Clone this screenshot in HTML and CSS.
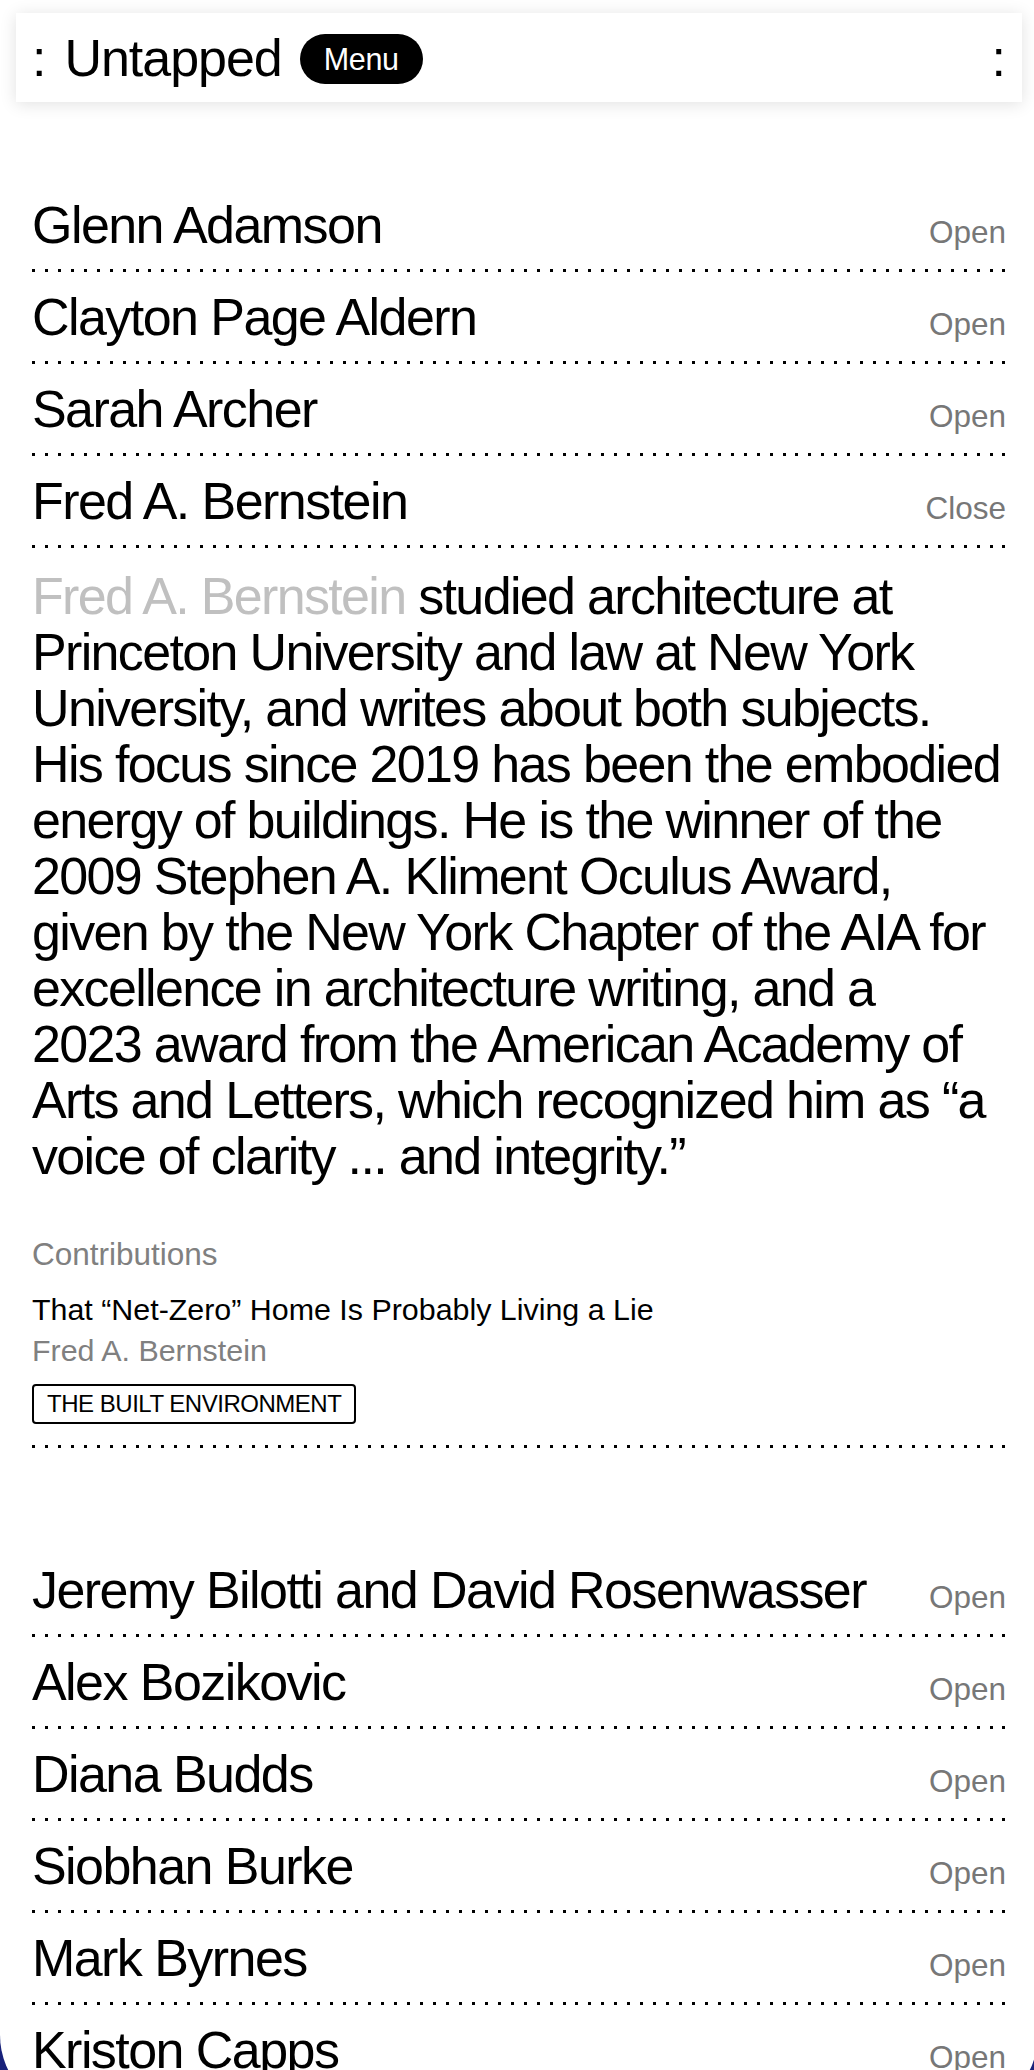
FILE: index.html
```html
<!DOCTYPE html>
<html lang="en">
<head>
<meta charset="utf-8">
<title>Untapped — Contributors</title>
<link rel="stylesheet" href="styles.css">
</head>
<body>
<header class="topbar">
  <div class="brand">
    <span class="brand-colon">:</span>
    <span class="brand-title">Untapped</span>
    <span class="menu-pill">Menu</span>
  </div>
  <span class="end-colon">:</span>
</header>

<main class="directory">
  <div class="entry-row"><span class="entry-name">Glenn Adamson</span><span class="entry-toggle">Open</span></div>
  <div class="entry-row"><span class="entry-name">Clayton Page Aldern</span><span class="entry-toggle">Open</span></div>
  <div class="entry-row"><span class="entry-name">Sarah Archer</span><span class="entry-toggle">Open</span></div>
  <div class="entry-row"><span class="entry-name">Fred A. Bernstein</span><span class="entry-toggle">Close</span></div>
  <section class="entry-panel">
    <p class="bio"><span class="bio-name">Fred A. Bernstein</span> studied architecture at<br>Princeton University and law at New York<br>University, and writes about both subjects.<br>His focus since 2019 has been the embodied<br>energy of buildings. He is the winner of the<br>2009 Stephen A. Kliment Oculus Award,<br>given by the New York Chapter of the AIA for<br>excellence in architecture writing, and a<br>2023 award from the American Academy of<br>Arts and Letters, which recognized him as “a<br>voice of clarity ... and integrity.”</p>
    <div class="contrib-label">Contributions</div>
    <div class="contrib-title">That “Net-Zero” Home Is Probably Living a Lie</div>
    <div class="contrib-author">Fred A. Bernstein</div>
    <span class="tag">THE BUILT ENVIRONMENT</span>
  </section>
  <div class="entry-row"><span class="entry-name">Jeremy Bilotti and David Rosenwasser</span><span class="entry-toggle">Open</span></div>
  <div class="entry-row"><span class="entry-name">Alex Bozikovic</span><span class="entry-toggle">Open</span></div>
  <div class="entry-row"><span class="entry-name">Diana Budds</span><span class="entry-toggle">Open</span></div>
  <div class="entry-row"><span class="entry-name">Siobhan Burke</span><span class="entry-toggle">Open</span></div>
  <div class="entry-row"><span class="entry-name">Mark Byrnes</span><span class="entry-toggle">Open</span></div>
  <div class="entry-row"><span class="entry-name">Kriston Capps</span><span class="entry-toggle">Open</span></div>
</main>

<div class="frame"></div>
</body>
</html>
```

FILE: styles.css
```css
* { box-sizing: border-box; }

html, body {
  margin: 0;
  padding: 0;
  background: #fff;
}

body {
  font-family: "Liberation Sans", Arial, sans-serif;
  color: #000;
}

/* Top bar */
.topbar {
  margin: 13px 12px 0 16px;
  height: 89px;
  background: #fff;
  box-shadow: 0 2px 16px rgba(0, 0, 0, 0.12);
  display: flex;
  align-items: center;
  justify-content: space-between;
  padding: 0 16px 0 16px;
}

.brand {
  display: flex;
  align-items: center;
  gap: 18px;
}

.brand-colon,
.end-colon {
  font-size: 52px;
  line-height: 1;
}

.brand-title {
  font-size: 52px;
  line-height: 1;
  letter-spacing: -0.02em;
}

.menu-pill {
  display: flex;
  align-items: center;
  height: 50px;
  padding: 0 24px;
  margin-top: 3px;
  border-radius: 25px;
  background: #000;
  color: #fff;
  font-size: 30.5px;
  letter-spacing: -0.01em;
}

/* Directory list */
.directory {
  padding: 78px 28px 0 32px;
}

.entry-row,
.entry-panel {
  background-image: repeating-linear-gradient(90deg, #000 0 3px, transparent 3px 12.94px);
  background-size: 100% 3px;
  background-repeat: no-repeat;
  background-position: left bottom;
}

.entry-row {
  display: flex;
  justify-content: space-between;
  align-items: baseline;
  padding: 16px 0 18px;
}

.entry-name {
  font-size: 52px;
  line-height: 58px;
  letter-spacing: -0.03em;
}

.entry-toggle {
  font-size: 31.5px;
  color: #777;
}

/* Expanded panel */
.entry-panel {
  padding: 20px 0 24px;
  margin-bottom: 97px;
}

.bio {
  margin: 0;
  font-size: 52px;
  line-height: 56px;
  letter-spacing: -0.032em;
  white-space: nowrap;
}

.bio-name {
  color: #c0c0c0;
}

.contrib-label {
  margin-top: 52px;
  font-size: 31.5px;
  line-height: 36px;
  color: #808080;
}

.contrib-title {
  margin-top: 17px;
  font-size: 30.4px;
  line-height: 41px;
}

.contrib-author {
  font-size: 30.4px;
  line-height: 41px;
  color: #808080;
}

.tag {
  display: inline-block;
  margin-top: 13px;
  padding: 4px 13px;
  border: 2px solid #000;
  border-radius: 4px;
  font-size: 24px;
  line-height: 28px;
  letter-spacing: -0.02em;
}

/* Rounded screen frame at the very bottom corners */
.frame {
  position: fixed;
  top: 0;
  left: 0;
  right: -4px;
  bottom: -45px;
  border-radius: 0 0 80px 80px;
  box-shadow: 0 0 0 120px #18217a;
  pointer-events: none;
}
```
